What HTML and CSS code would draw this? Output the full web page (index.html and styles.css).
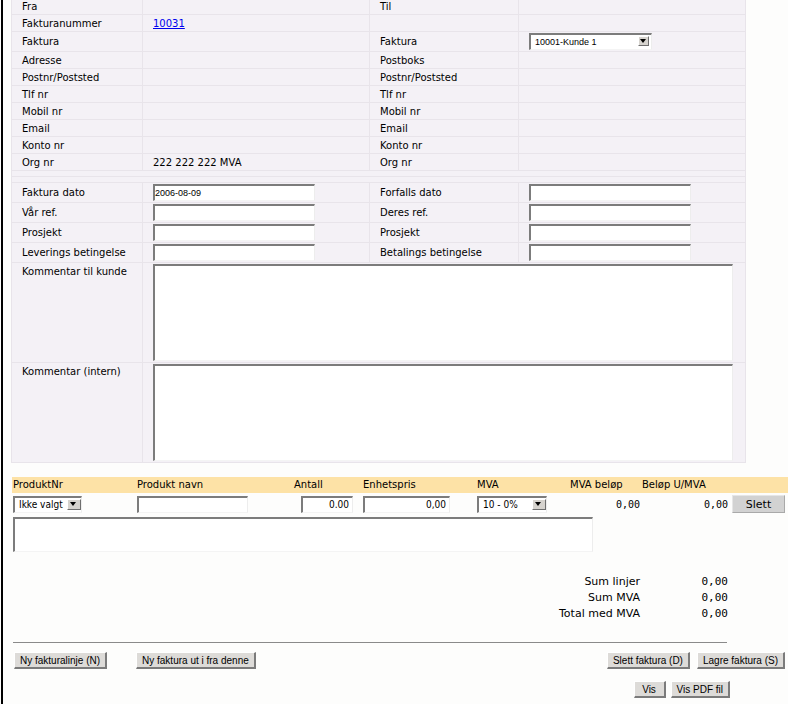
FILE: index.html
```html
<!DOCTYPE html>
<html>
<head>
    <meta charset="UTF-8">
    <title>Faktura</title>
    <link rel="stylesheet" href="styles.css">
</head>
<body>
<div class="page">

    <div class="info-grid">
        <div class="cell label">Fra</div>
        <div class="cell"></div>
        <div class="cell label">Til</div>
        <div class="cell"></div>

        <div class="cell label">Fakturanummer</div>
        <div class="cell"><a href="#" class="invoice-link">10031</a></div>
        <div class="cell"></div>
        <div class="cell"></div>

        <div class="cell label">Faktura</div>
        <div class="cell"></div>
        <div class="cell label">Faktura</div>
        <div class="cell">
            <span class="combo combo-customer">
                <select class="combo-select">
                    <option>10001-Kunde 1</option>
                </select>
                <span class="combo-arrow"></span>
            </span>
        </div>

        <div class="cell label">Adresse</div>
        <div class="cell"></div>
        <div class="cell label">Postboks</div>
        <div class="cell"></div>

        <div class="cell label">Postnr/Poststed</div>
        <div class="cell"></div>
        <div class="cell label">Postnr/Poststed</div>
        <div class="cell"></div>

        <div class="cell label">Tlf nr</div>
        <div class="cell"></div>
        <div class="cell label">Tlf nr</div>
        <div class="cell"></div>

        <div class="cell label">Mobil nr</div>
        <div class="cell"></div>
        <div class="cell label">Mobil nr</div>
        <div class="cell"></div>

        <div class="cell label">Email</div>
        <div class="cell"></div>
        <div class="cell label">Email</div>
        <div class="cell"></div>

        <div class="cell label">Konto nr</div>
        <div class="cell"></div>
        <div class="cell label">Konto nr</div>
        <div class="cell"></div>

        <div class="cell label">Org nr</div>
        <div class="cell">222 222 222 MVA</div>
        <div class="cell label">Org nr</div>
        <div class="cell"></div>

        <div class="cell cell-wide"></div>
        <div class="cell cell-wide"></div>

        <div class="cell label">Faktura dato</div>
        <div class="cell"><input type="text" class="field" value="2006-08-09"></div>
        <div class="cell label">Forfalls dato</div>
        <div class="cell"><input type="text" class="field"></div>

        <div class="cell label">Vår ref.</div>
        <div class="cell"><input type="text" class="field"></div>
        <div class="cell label">Deres ref.</div>
        <div class="cell"><input type="text" class="field"></div>

        <div class="cell label">Prosjekt</div>
        <div class="cell"><input type="text" class="field"></div>
        <div class="cell label">Prosjekt</div>
        <div class="cell"><input type="text" class="field"></div>

        <div class="cell label">Leverings betingelse</div>
        <div class="cell"><input type="text" class="field"></div>
        <div class="cell label">Betalings betingelse</div>
        <div class="cell"><input type="text" class="field"></div>

        <div class="cell label label-top">Kommentar til kunde</div>
        <div class="cell cell-comment"><textarea class="comment"></textarea></div>

        <div class="cell label label-top">Kommentar (intern)</div>
        <div class="cell cell-comment"><textarea class="comment"></textarea></div>
    </div>

    <div class="lines">
        <div class="line-head">
            <div class="head-first">ProduktNr</div>
            <div>Produkt navn</div>
            <div>Antall</div>
            <div>Enhetspris</div>
            <div>MVA</div>
            <div>MVA beløp</div>
            <div>Beløp U/MVA</div>
            <div></div>
        </div>
        <div class="line-row">
            <div>
                <span class="combo combo-product">
                    <select class="combo-select">
                        <option>Ikke valgt</option>
                    </select>
                    <span class="combo-arrow"></span>
                </span>
            </div>
            <div><input type="text" class="line-field line-name"></div>
            <div><input type="text" class="line-field line-qty" value="0.00"></div>
            <div><input type="text" class="line-field line-price" value="0,00"></div>
            <div>
                <span class="combo combo-vat">
                    <select class="combo-select">
                        <option>10 - 0%</option>
                    </select>
                    <span class="combo-arrow"></span>
                </span>
            </div>
            <div class="amount amount-vat">0,00</div>
            <div class="amount amount-net">0,00</div>
            <div><button class="delete-button">Slett</button></div>
        </div>
        <textarea class="line-note"></textarea>
    </div>

    <div class="sums">
        <div class="sum-label">Sum linjer</div>
        <div class="sum-value">0,00</div>
        <div class="sum-label">Sum MVA</div>
        <div class="sum-value">0,00</div>
        <div class="sum-label">Total med MVA</div>
        <div class="sum-value">0,00</div>
    </div>

    <hr class="divider">

    <div class="actions">
        <div class="action-group action-left">
            <button class="action-button">Ny fakturalinje (N)</button>
            <button class="action-button">Ny faktura ut i fra denne</button>
        </div>
        <div class="action-group">
            <button class="action-button">Slett faktura (D)</button>
            <button class="action-button">Lagre faktura (S)</button>
        </div>
    </div>

    <div class="actions actions-view">
        <div class="action-group">
            <button class="action-button">Vis</button>
            <button class="action-button">Vis PDF fil</button>
        </div>
    </div>

</div>
</body>
</html>
```

FILE: styles.css
```css
body {
    margin: 0;
    background: #fdfdfc;
    font-family: "DejaVu Sans", Verdana, sans-serif;
    font-size: 10px;
    color: #000;
}

.page {
    margin-left: 1px;
    border-left: 2px solid #000;
    padding-left: 9px;
    min-height: 704px;
    overflow: hidden;
}

/* invoice header table */
.info-grid {
    display: grid;
    grid-template-columns: 130px 226px 148px 226px;
    grid-template-rows: 16px 16px 19px repeat(7, 16px) 5px 5px repeat(4, 19px) 99px 99px;
    gap: 1px;
    padding: 1px;
    margin: -3px 0 0 -1px;
    width: 733px;
    background: #e8e4ea;
}

.cell {
    background: #f4f1f6;
    padding-left: 10px;
    display: flex;
    align-items: center;
}

.cell-wide {
    grid-column: 1 / -1;
}

.label-top {
    align-items: flex-start;
    padding-top: 3px;
}

.cell-comment {
    grid-column: 2 / -1;
    align-items: flex-start;
    padding-top: 1px;
}

.invoice-link {
    color: #0000ee;
}

.field {
    width: 162px;
    height: 17px;
    box-sizing: border-box;
    margin: 0;
    padding: 0;
    background: #fff;
    border-style: solid;
    border-width: 2px 1px 1px 2px;
    border-color: #7c7c7c #ededed #f4f4f4 #7c7c7c;
    font-family: "Liberation Sans", Arial, sans-serif;
    font-size: 9px;
}

.comment {
    width: 580px;
    height: 97px;
    box-sizing: border-box;
    margin: 0;
    resize: none;
    background: #fff;
    border-style: solid;
    border-width: 2px 1px 1px 2px;
    border-color: #7c7c7c #ededed #f4f4f4 #7c7c7c;
}

/* fake native combo box */
.combo {
    position: relative;
    display: inline-block;
}

.combo-select {
    appearance: none;
    -webkit-appearance: none;
    display: block;
    height: 17px;
    box-sizing: border-box;
    margin: 0;
    padding: 0 0 0 4px;
    background: #fff;
    border-style: solid;
    border-width: 2px 1px 1px 2px;
    border-color: #7c7c7c #ededed #f4f4f4 #7c7c7c;
    border-radius: 0;
    color: #000;
}

.combo-arrow {
    position: absolute;
    right: 3px;
    top: 3px;
    width: 11px;
    height: 10px;
    box-sizing: border-box;
    background: #d6d3ce;
    border-style: solid;
    border-width: 1px;
    border-color: #fff #6e6e6e #6e6e6e #fff;
}

.combo-arrow::after {
    content: "";
    position: absolute;
    left: 1px;
    top: 2px;
    border-left: 3.5px solid transparent;
    border-right: 3.5px solid transparent;
    border-top: 4px solid #000;
}

.combo-customer .combo-select {
    width: 123px;
    font-family: "Liberation Sans", Arial, sans-serif;
    font-size: 9px;
}

.combo-product .combo-select,
.combo-vat .combo-select {
    font-family: "DejaVu Sans Condensed", "DejaVu Sans", sans-serif;
    font-size: 10px;
}

.combo-product .combo-select {
    width: 69px;
}

.combo-vat .combo-select {
    width: 70px;
}

.combo-product .combo-arrow,
.combo-vat .combo-arrow {
    width: 14px;
    height: 11px;
    right: 1px;
    top: 3px;
}

.combo-product .combo-arrow::after,
.combo-vat .combo-arrow::after {
    left: 2px;
}

/* product lines */
.lines {
    margin-top: 14px;
}

.line-head,
.line-row {
    display: grid;
    grid-template-columns: 125px 157px 69px 114px 93px 72px 90px 56px;
}

.line-head {
    height: 16px;
    line-height: 16px;
    background: #fde2a6;
}

.head-first {
    padding-left: 1px;
}

.line-row {
    height: 22px;
    align-items: center;
}

.combo-product {
    margin-left: 1px;
}

.line-field {
    height: 17px;
    box-sizing: border-box;
    margin: 0;
    padding: 0 3px;
    background: #fff;
    border-style: solid;
    border-width: 2px 1px 1px 2px;
    border-color: #7c7c7c #ededed #f4f4f4 #7c7c7c;
    font-family: "DejaVu Sans Condensed", "DejaVu Sans", sans-serif;
    font-size: 10px;
    text-align: right;
}

.line-name {
    width: 111px;
    text-align: left;
}

.line-qty {
    width: 52px;
    margin-left: 7px;
}

.line-price {
    width: 87px;
}

.amount {
    text-align: right;
    font-family: "DejaVu Sans Mono", monospace;
    font-size: 10px;
}

.amount-vat {
    padding-right: 2px;
}

.amount-net {
    padding-right: 4px;
}

.delete-button {
    width: 53px;
    height: 18px;
    padding: 0;
    background: #d2d2d2;
    border-style: solid;
    border-width: 1px;
    border-color: #e6e6e6 #a9a9a9 #a9a9a9 #e6e6e6;
    font-family: "DejaVu Sans", sans-serif;
    font-size: 11px;
    color: #000;
}

.line-note {
    display: block;
    width: 580px;
    height: 35px;
    box-sizing: border-box;
    margin: 2px 0 0 1px;
    resize: none;
    background: #fff;
    border-style: solid;
    border-width: 2px 1px 1px 2px;
    border-color: #7c7c7c #ededed #f4f4f4 #7c7c7c;
}

/* totals */
.sums {
    display: grid;
    grid-template-columns: 628px 88px;
    margin-top: 22px;
    line-height: 16px;
    font-size: 11px;
}

.sum-label,
.sum-value {
    text-align: right;
}

.sum-value {
    font-family: "DejaVu Sans Mono", monospace;
}

.divider {
    width: 714px;
    height: 0;
    margin: 20px 0 0 1px;
    border: none;
    border-top: 1px solid #8a8a8a;
}

/* buttons */
.actions {
    display: flex;
    justify-content: space-between;
    margin-top: 9px;
    padding-right: 3px;
}

.actions-view {
    justify-content: flex-end;
    margin-top: 12px;
    padding-right: 58px;
}

.action-group {
    display: flex;
    gap: 7px;
}

.action-left {
    margin-left: 2px;
    gap: 29px;
}

.actions-view .action-group {
    gap: 5px;
}

.action-button {
    min-width: 32px;
    height: 17px;
    padding: 0 5px;
    background: #dddbd8;
    border-style: solid;
    border-width: 1px 2px 2px 1px;
    border-color: #fff #7b7b7b #7b7b7b #fff;
    font-family: "Liberation Sans", Arial, sans-serif;
    font-size: 10px;
    color: #000;
    line-height: 13px;
}
```
